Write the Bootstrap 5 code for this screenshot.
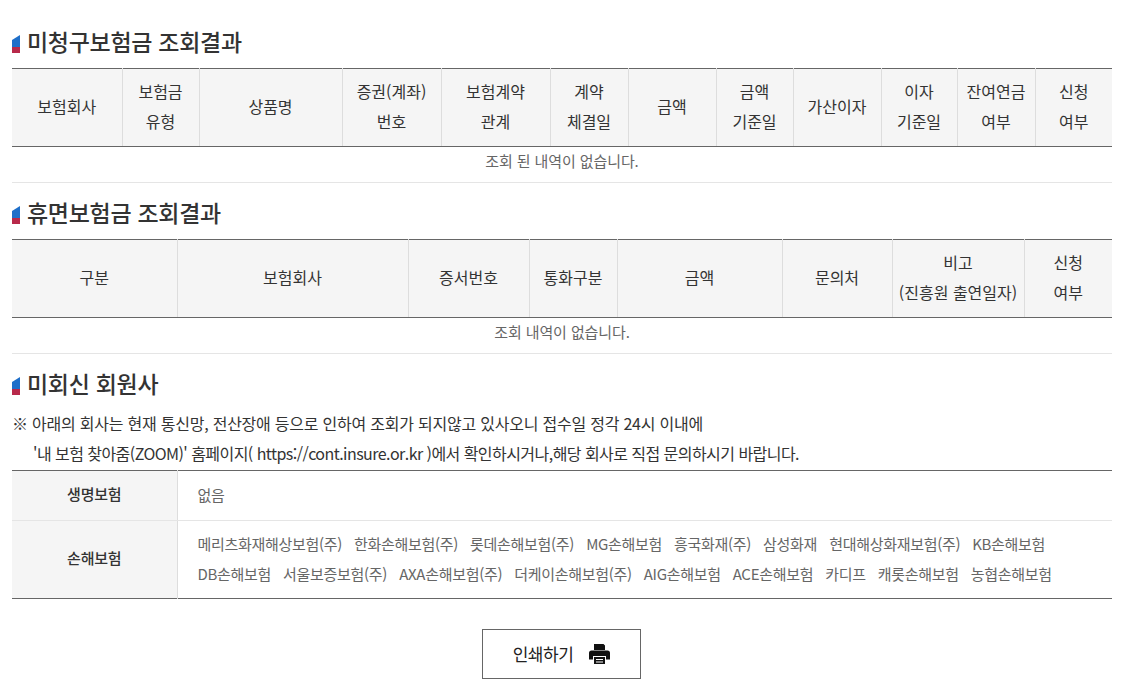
<!DOCTYPE html>
<html lang="ko">
<head>
<meta charset="utf-8">
<title>조회결과</title>
<link href="https://cdn.jsdelivr.net/npm/bootstrap@5.3.0/dist/css/bootstrap.min.css" rel="stylesheet">
<style>
body{font-family:"Noto Sans CJK KR","Noto Sans",sans-serif;color:#666;background:#fff;font-size:15px;margin:0}
.page-wrap{width:1100px;margin-left:12px;padding-top:24px}
.sec-title{font-size:23px;font-weight:500;color:#333;line-height:34px;height:34px;margin:0 0 10px;padding-left:15px;position:relative;letter-spacing:-.3px}
.sec-title svg{position:absolute;left:0;top:11px}
.res-table{width:1100px;table-layout:fixed;border-collapse:collapse;border-top:1px solid #666;margin:0}
.res-table th{background:#f5f5f5;color:#333;font-weight:400;font-size:16px;line-height:30px;height:78px;text-align:center;vertical-align:middle;padding:0 0 4px;border-right:1px solid #ddd;border-bottom:1px solid #666;letter-spacing:0}
.res-table th:last-child{border-right:0}
.res-table td{text-align:center;height:36px;line-height:26px;padding:0 0 8px;font-size:15px;color:#666;border-bottom:1px solid #e5e5e5;letter-spacing:-.1px}
.gap-block{margin-top:12px}
.notice{color:#333;font-size:16px;line-height:30px;margin:0;white-space:nowrap}
.notice-a{letter-spacing:-.23px;margin-top:-2px}
.notice-b{letter-spacing:-.55px;padding-left:21px}
.co-table{width:1100px;table-layout:fixed;border-collapse:collapse;border-top:1px solid #666;border-bottom:1px solid #666;margin-top:2px}
.co-table th{background:#f5f5f5;color:#333;font-weight:500;font-size:15px;text-align:center;border-right:1px solid #ddd;border-bottom:1px solid #e5e5e5;padding:0 0 2px;letter-spacing:-.2px}
.co-table td{padding:8px 0 9px 20px;font-size:15px;line-height:30px;color:#666;border-bottom:1px solid #e5e5e5;letter-spacing:-.3px}
.co-table tr:last-child th,.co-table tr:last-child td{border-bottom:0}
.co-table .row-a th,.co-table .row-a td{height:50px;padding-top:0;padding-bottom:2px}
.co-item{display:inline-block;margin-right:12px}
.print-btn{width:159px;height:50px;border:1px solid #666;border-radius:0;background:#fff;color:#222;font-size:17px;letter-spacing:-.5px;margin:30px 0 0 470px;padding:0}
</style>
</head>
<body>
<div class="page-wrap">
  <h2 class="sec-title"><svg width="8" height="18" viewBox="0 0 8 18"><path d="M8 0V12H0V5Z" fill="#1f6fc9"/><path d="M0 12H8V18H0Z" fill="#b8294a"/></svg>미청구보험금 조회결과</h2>
  <table class="res-table">
    <colgroup><col style="width:110px"><col style="width:77px"><col style="width:143px"><col style="width:99px"><col style="width:109px"><col style="width:78px"><col style="width:88px"><col style="width:77px"><col style="width:88px"><col style="width:76px"><col style="width:78px"><col style="width:77px"></colgroup>
    <thead><tr><th>보험회사</th><th>보험금<br>유형</th><th>상품명</th><th>증권(계좌)<br>번호</th><th>보험계약<br>관계</th><th>계약<br>체결일</th><th>금액</th><th>금액<br>기준일</th><th>가산이자</th><th>이자<br>기준일</th><th>잔여연금<br>여부</th><th>신청<br>여부</th></tr></thead>
    <tbody><tr><td colspan="12">조회 된 내역이 없습니다.</td></tr></tbody>
  </table>

  <div class="gap-block">
    <h2 class="sec-title"><svg width="8" height="18" viewBox="0 0 8 18"><path d="M8 0V12H0V5Z" fill="#1f6fc9"/><path d="M0 12H8V18H0Z" fill="#b8294a"/></svg>휴면보험금 조회결과</h2>
    <table class="res-table">
      <colgroup><col style="width:165px"><col style="width:231px"><col style="width:121px"><col style="width:88px"><col style="width:165px"><col style="width:110px"><col style="width:132px"><col style="width:88px"></colgroup>
      <thead><tr><th>구분</th><th>보험회사</th><th>증서번호</th><th>통화구분</th><th>금액</th><th>문의처</th><th>비고<br>(진흥원 출연일자)</th><th>신청<br>여부</th></tr></thead>
      <tbody><tr><td colspan="8">조회 내역이 없습니다.</td></tr></tbody>
    </table>
  </div>

  <div class="gap-block">
    <h2 class="sec-title"><svg width="8" height="18" viewBox="0 0 8 18"><path d="M8 0V12H0V5Z" fill="#1f6fc9"/><path d="M0 12H8V18H0Z" fill="#b8294a"/></svg>미회신 회원사</h2>
    <p class="notice notice-a">※ 아래의 회사는 현재 통신망, 전산장애 등으로 인하여 조회가 되지않고 있사오니 접수일 정각 24시 이내에</p>
    <p class="notice notice-b">'내 보험 찾아줌(ZOOM)' 홈페이지( https://cont.insure.or.kr )에서 확인하시거나,해당 회사로 직접 문의하시기 바랍니다.</p>
    <table class="co-table">
      <colgroup><col style="width:165px"><col></colgroup>
      <tbody>
        <tr class="row-a"><th>생명보험</th><td>없음</td></tr>
        <tr><th>손해보험</th><td>
          <span class="co-item">메리츠화재해상보험(주)</span><span class="co-item">한화손해보험(주)</span><span class="co-item">롯데손해보험(주)</span><span class="co-item">MG손해보험</span><span class="co-item">흥국화재(주)</span><span class="co-item">삼성화재</span><span class="co-item">현대해상화재보험(주)</span><span class="co-item">KB손해보험</span><br>
          <span class="co-item">DB손해보험</span><span class="co-item">서울보증보험(주)</span><span class="co-item">AXA손해보험(주)</span><span class="co-item">더케이손해보험(주)</span><span class="co-item">AIG손해보험</span><span class="co-item">ACE손해보험</span><span class="co-item">카디프</span><span class="co-item">캐롯손해보험</span><span class="co-item">농협손해보험</span>
        </td></tr>
      </tbody>
    </table>
  </div>

  <button type="button" class="btn print-btn d-flex align-items-center justify-content-center gap-3">인쇄하기
    <svg width="21" height="20" viewBox="0 0 21 20"><path fill="#111" fill-rule="evenodd" d="M5 0H14.500L16 1.500V6H5ZM2.500 6.500H18.500A2.500 2.500 0 0 1 21 9V15.500H17V12H4V15.500H0V9A2.500 2.500 0 0 1 2.500 6.500ZM5 13H16V20H5ZM7 15V16H14V15ZM7 17.500V18.500H14V17.500Z"/></svg>
  </button>
</div>
<script src="https://cdn.jsdelivr.net/npm/bootstrap@5.3.0/dist/js/bootstrap.bundle.min.js"></script>
</body>
</html>
